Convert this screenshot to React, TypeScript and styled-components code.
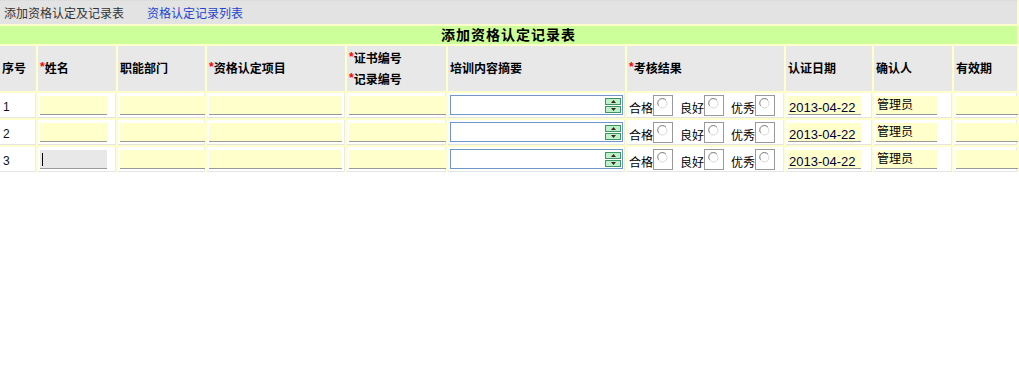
import React from 'react'
import styled, { createGlobalStyle } from 'styled-components'

const GlobalStyle = createGlobalStyle`
  html, body {
    margin: 0;
    padding: 0;
    background: #ffffff;
  }
  body {
    font-family: "Liberation Sans", "Noto Sans CJK SC", sans-serif;
    font-size: 12px;
    color: #000;
  }
`

const Sheet = styled.div`
  box-sizing: border-box;
  width: 1019px;
  padding-right: 2px;
  display: grid;
  grid-template-columns: 36px 78px 87px 138px 99px 177px 157px 86px 78px 63px;
  gap: 2px;
  background: #ffffcc;
`

const TopBar = styled.div`
  grid-column: 1 / -1;
  height: 24px;
  display: flex;
  align-items: center;
  padding-left: 4px;
  background: #e3e3e3;
  border-top: 1px dotted #d6d6d6;
  box-sizing: border-box;
  font-size: 12px;
  color: #333;
`

const NavLink = styled.a`
  margin-left: 23px;
  color: #1f45d0;
  text-decoration: none;
`

const Title = styled.div`
  grid-column: 1 / -1;
  height: 18px;
  line-height: 18px;
  background: #ccff99;
  text-align: center;
  font-size: 14px;
  font-weight: bold;
  letter-spacing: 1px;
`

const HeadCell = styled.div`
  height: 45px;
  box-sizing: border-box;
  display: flex;
  flex-direction: column;
  justify-content: center;
  padding: 2px 0 0 2px;
  background: #e8e8e8;
  font-weight: bold;
  font-size: 12px;
  line-height: 21px;
`

const Req = styled.span`
  color: #ff0000;
  position: relative;
  top: -2px;
`

const Cell = styled.div`
  height: 25px;
  box-sizing: border-box;
  display: flex;
  align-items: center;
  padding-left: 2px;
  background: #ffffff;
  border-bottom: 1px solid #e4e4e4;
  border-right: 1px solid #ececec;
`

const Num = styled.span`
  padding: 4px 0 0 1px;
  font-size: 12px;
  color: #111;
`

const Field = styled.input<{ $w: number; $focused?: boolean; $big?: boolean }>`
  width: ${p => p.$w}px;
  height: 19px;
  box-sizing: border-box;
  padding: ${p => (p.$big ? '5px 1px 0' : '0 1px')};
  border: none;
  border-bottom: 1px solid #999;
  outline: none;
  font-family: "Liberation Sans", "Noto Sans CJK SC", sans-serif;
  font-size: ${p => (p.$big ? '13px' : '12px')};
  color: ${p => (p.$big ? '#000033' : '#000')};
  line-height: 14px;
  background: ${p =>
    p.$focused
      ? 'linear-gradient(#000, #000) no-repeat 2px 3px / 1px 13px, #e8e8e8'
      : '#ffffcc'};
`

const TextField = styled(Field)`
  padding: 0 1px 3px;
`

const Spinner = styled.div`
  width: 173px;
  height: 20px;
  box-sizing: border-box;
  border: 1px solid #6f98c8;
  background: #fff;
  display: flex;
  justify-content: flex-end;
  align-items: center;
  padding-right: 1px;
`

const SpinButtons = styled.div`
  display: flex;
  flex-direction: column;
  gap: 1px;
`

const SpinButton = styled.div`
  width: 16px;
  height: 7px;
  box-sizing: border-box;
  border: 1px solid #3f9464;
  background: #bdf2c8;
  display: flex;
  align-items: center;
  justify-content: center;
`

const Choice = styled.span<{ $first?: boolean }>`
  display: inline-flex;
  align-items: flex-end;
  margin-left: ${p => (p.$first ? '0' : '7px')};
  font-size: 12px;
  line-height: 14px;
`

const RadioBox = styled.span`
  width: 20px;
  height: 21px;
  box-sizing: border-box;
  border: 1px solid #999;
  background: #fff;
  display: inline-flex;
  align-items: flex-start;
  padding: 2px 0 0 3px;
`

const Arrow: React.FC<{ up?: boolean }> = ({ up }) => (
  <svg width="5" height="3" viewBox="0 0 5 3">
    <path d={up ? 'M2.5 0 L5 3 L0 3 Z' : 'M0 0 L5 0 L2.5 3 Z'} fill="#402020" />
  </svg>
)

const RadioMark: React.FC = () => (
  <svg width="11" height="11" viewBox="0 0 11 11">
    <circle cx="5.5" cy="5.5" r="4.5" fill="#fff" stroke="#d8d8d8" />
    <path d="M9 2.2 A4.5 4.5 0 0 0 1.6 7.8" fill="none" stroke="#8a8a8a" />
  </svg>
)

const Radio: React.FC<{ label: string; first?: boolean }> = ({ label, first }) => (
  <Choice $first={first}>
    {label}
    <RadioBox>
      <RadioMark />
    </RadioBox>
  </Choice>
)

const rows = [1, 2, 3]

export default function App() {
  return (
    <>
      <GlobalStyle />
      <Sheet>
        <TopBar>
          添加资格认定及记录表
          <NavLink href="#">资格认定记录列表</NavLink>
        </TopBar>
        <Title>添加资格认定记录表</Title>

        <HeadCell>序号</HeadCell>
        <HeadCell><span><Req>*</Req>姓名</span></HeadCell>
        <HeadCell>职能部门</HeadCell>
        <HeadCell><span><Req>*</Req>资格认定项目</span></HeadCell>
        <HeadCell>
          <span><Req>*</Req>证书编号</span>
          <span><Req>*</Req>记录编号</span>
        </HeadCell>
        <HeadCell>培训内容摘要</HeadCell>
        <HeadCell><span><Req>*</Req>考核结果</span></HeadCell>
        <HeadCell>认证日期</HeadCell>
        <HeadCell>确认人</HeadCell>
        <HeadCell>有效期</HeadCell>

        {rows.map(n => (
          <React.Fragment key={n}>
            <Cell><Num>{n}</Num></Cell>
            <Cell><Field $w={67} $focused={n === 3} /></Cell>
            <Cell><Field $w={85} /></Cell>
            <Cell><Field $w={133} /></Cell>
            <Cell><Field $w={97} /></Cell>
            <Cell>
              <Spinner>
                <SpinButtons>
                  <SpinButton><Arrow up /></SpinButton>
                  <SpinButton><Arrow /></SpinButton>
                </SpinButtons>
              </Spinner>
            </Cell>
            <Cell>
              <Radio label="合格" first />
              <Radio label="良好" />
              <Radio label="优秀" />
            </Cell>
            <Cell><Field $w={73} $big defaultValue="2013-04-22" /></Cell>
            <Cell><TextField $w={61} defaultValue="管理员" /></Cell>
            <Cell><Field $w={62} /></Cell>
          </React.Fragment>
        ))}
      </Sheet>
    </>
  )
}
